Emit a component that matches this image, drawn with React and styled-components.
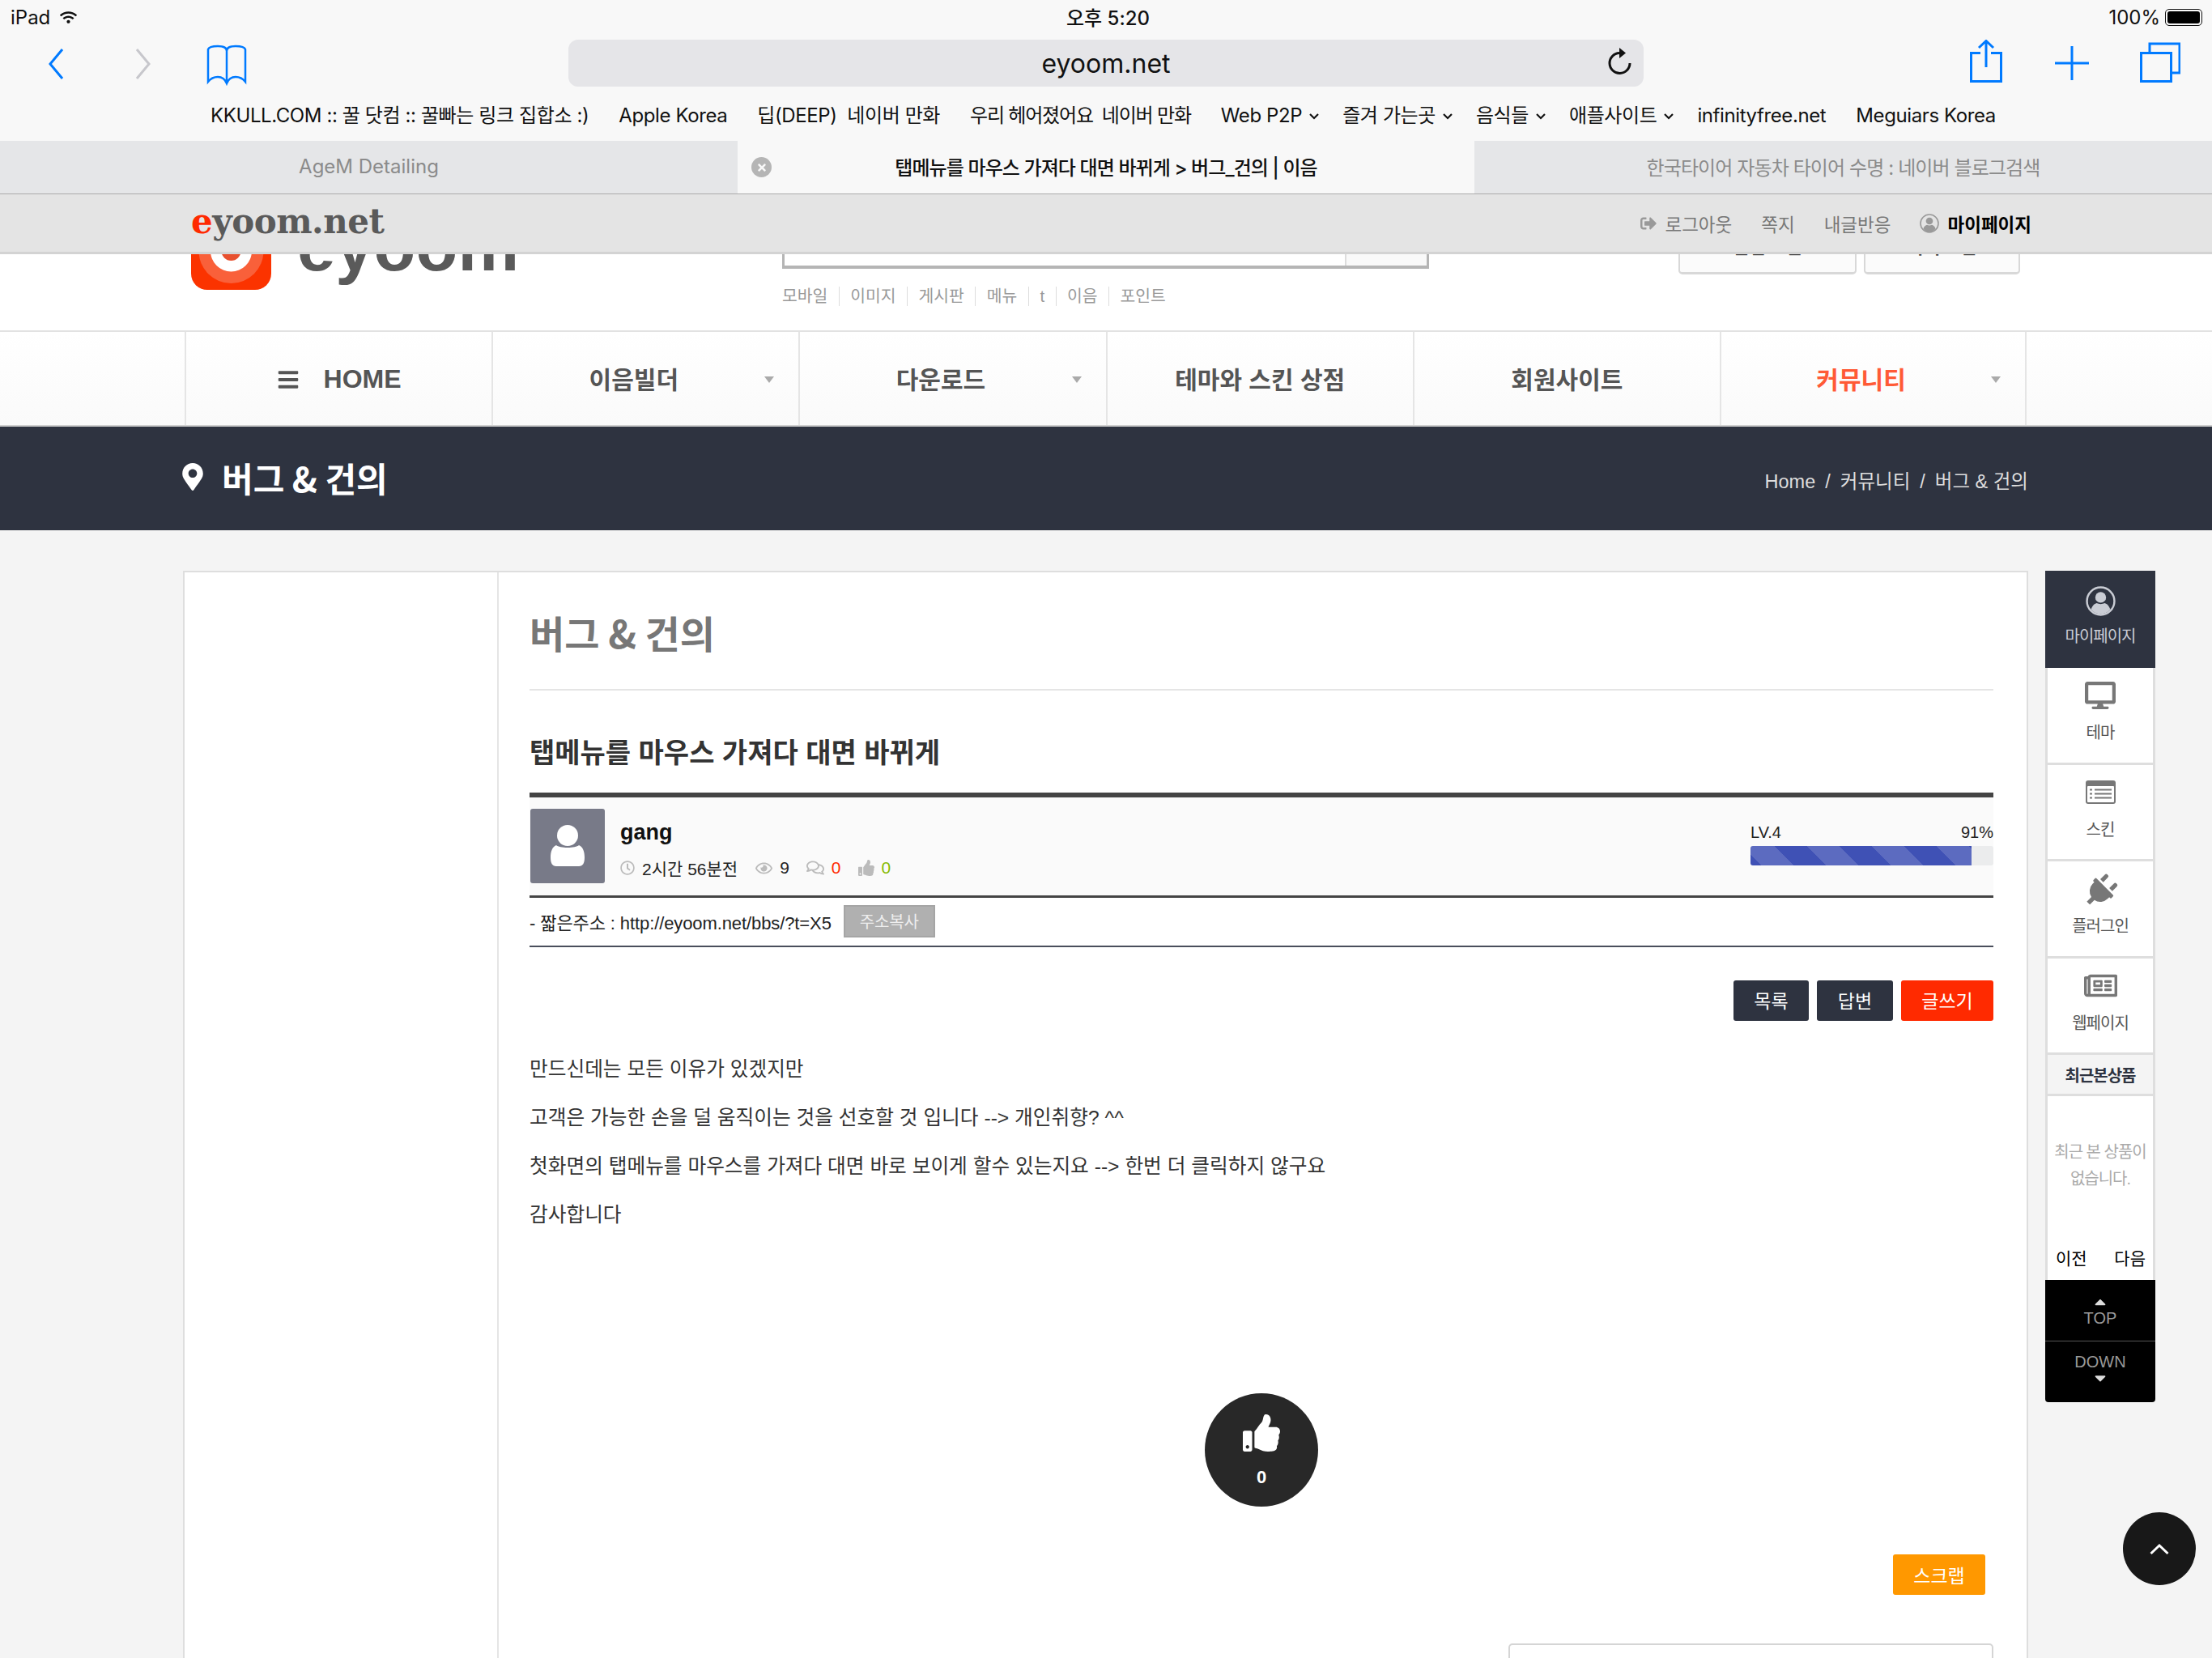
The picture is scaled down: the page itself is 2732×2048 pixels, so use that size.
import styled, { createGlobalStyle } from "styled-components";
import {
   FaBars, FaCaretDown, FaCaretUp, FaDesktop, FaMapMarkerAlt, FaPlug, FaRegClock,
   FaRegComments, FaRegEye, FaRegNewspaper, FaSignOutAlt, FaThumbsUp, FaTimes, FaWifi,
} from "react-icons/fa";

const sans = `"Liberation Sans", "Noto Sans CJK KR", sans-serif`;
const korean = `"Noto Sans CJK KR", sans-serif`;
const ui = `Inter, "Noto Sans CJK KR", sans-serif`;

const Global = createGlobalStyle`
   html, body { margin: 0; padding: 0; background: #f4f4f4; }
   * { box-sizing: border-box; }
`;

const favorites = [
   { label: "KKULL.COM :: 꿀 닷컴 :: 꿀빠는 링크 집합소 :)" },
   { label: "Apple Korea" },
   { label: "딥(DEEP)  네이버 만화" },
   { label: "우리 헤어졌어요  네이버 만화", tight: true },
   { label: "Web P2P", more: true },
   { label: "즐겨 가는곳", more: true },
   { label: "음식들", more: true },
   { label: "애플사이트", more: true },
   { label: "infinityfree.net" },
   { label: "Meguiars Korea" },
];

const tags = ["모바일", "이미지", "게시판", "메뉴", "t", "이음", "포인트"];

const navItems = [
   { label: "이음빌더", caret: true },
   { label: "다운로드", caret: true },
   { label: "테마와 스킨 상점" },
   { label: "회원사이트" },
   { label: "커뮤니티", caret: true, active: true },
];

const lines = [
   "만드신데는 모든 이유가 있겠지만",
   "고객은 가능한 손을 덜 움직이는 것을 선호할 것 입니다 --> 개인취향? ^^",
   "첫화면의 탭메뉴를 마우스를 가져다 대면 바로 보이게 할수 있는지요 --> 한번 더 클릭하지 않구요",
   "감사합니다",
];

// ring with head and shoulders, used in the sticky bar and the side panel
const UserRing = ({ size, color }) => (
   <svg width={size} height={size} viewBox="0 0 36 36" fill={color}>
      <circle cx="18" cy="18" r="16.5" fill="none" stroke={color} strokeWidth="2.4" />
      <circle cx="18" cy="13.5" r="6.5" />
      <path d="M6.5 28C8 23 11 21 13.5 20.5C16 22 20 22 22.5 20.5C25 21 28 23 29.5 28C26.5 31.5 22.5 33.5 18 33.5C13.5 33.5 9.5 31.5 6.5 28Z" />
   </svg>
);

const ListIcon = () => (
   <svg width="37" height="29" viewBox="0 0 37 29">
      <rect width="37" height="29" rx="3" fill="#777" />
      <rect x="2" y="7" width="33" height="20" rx="1" fill="#fff" />
      <path d="M5 11.5H8M11 11.5H32M5 16.5H8M11 16.5H32M5 21.5H8M11 21.5H32" stroke="#777" strokeWidth="2.2" />
   </svg>
);

const sideItems = [
   { label: "테마", icon: <FaDesktop size={38} /> },
   { label: "스킨", icon: <ListIcon /> },
   { label: "플러그인", icon: <FaPlug size={42} style={{ transform: "rotate(45deg) translate(2px, 2px)" }} /> },
   { label: "웹페이지", icon: <FaRegNewspaper size={41} /> },
];

const App = () => (
   <Page>
      <Global />
      <Chrome>
         <StatusBar>
            <StatusSide>iPad <FaWifi size={21} style={{ marginLeft: 6 }} /></StatusSide>
            <Clock>오후 5:20</Clock>
            <StatusSide $right>100% <Battery><i /></Battery></StatusSide>
         </StatusBar>
         <Toolbar>
            <ToolGroup>
               <svg width="19" height="58" fill="none" stroke="#007aff" strokeWidth="3"><path d="M17 12L2 30L17 48" /></svg>
               <svg width="19" height="58" fill="none" stroke="#c7c7cc" strokeWidth="3" style={{ marginLeft: 88 }}><path d="M2 12L17 30L2 48" /></svg>
               <svg width="50" height="58" fill="none" stroke="#007aff" strokeWidth="2.5" style={{ marginLeft: 69 }}>
                  <path d="M25 14C25 9 20 8 14 8C8 8 3 9 2 12L2 52C6 47 10 46 14 46C19 46 23 49 25 54C27 49 31 46 36 46C40 46 44 47 48 52L48 12C47 9 42 8 36 8C30 8 25 9 25 14ZM25 14L25 54" />
               </svg>
            </ToolGroup>
            <UrlPill>
               eyoom.net
               <Reload width="30" height="34" fill="none">
                  <path d="M27 19A12.5 12.5 0 1 1 14 6.5" stroke="#111" strokeWidth="3" />
                  <path d="M14 0L22 6.5L14 13Z" fill="#111" />
               </Reload>
            </UrlPill>
            <ToolGroup $right>
               <svg width="40" height="58" fill="none" stroke="#007aff" strokeWidth="3">
                  <path d="M13 16.5H1.5V51.5H38.5V16.5H26M20 34V2M11 10L20 1.5L29 10" />
               </svg>
               <svg width="42" height="58" fill="none" stroke="#007aff" strokeWidth="3" style={{ marginLeft: 65 }}>
                  <path d="M21 8V50M0 29H42" />
               </svg>
               <svg width="50" height="58" fill="none" stroke="#007aff" strokeWidth="3" style={{ marginLeft: 63 }}>
                  <path d="M1.5 16.5H38.5V51.5H1.5ZM12 15V5H49V41H39" />
               </svg>
            </ToolGroup>
         </Toolbar>
         <Favorites>
            {favorites.map(f => (
               <Favorite key={f.label} $tight={f.tight} $more={f.more}>
                  {f.label}
                  {f.more && <svg width="12" height="8" fill="none" stroke="#111" strokeWidth="2.2"><path d="M1 1L6 6L11 1" /></svg>}
               </Favorite>
            ))}
         </Favorites>
         <Tabs>
            <Tab>AgeM Detailing</Tab>
            <Tab $active $tight>
               <TabClose><FaTimes size={14} color="#f8f8f8" /></TabClose>
               탭메뉴를 마우스 가져다 대면 바뀌게 &gt; 버그_건의 | 이음
            </Tab>
            <Tab $tight>한국타이어 자동차 타이어 수명 : 네이버 블로그검색</Tab>
         </Tabs>
      </Chrome>

      <StickyBar>
         <StickyLogo><b>e</b>yoom.net</StickyLogo>
         <StickyLinks>
            <StickyLink><FaSignOutAlt size={20} color="#999" />로그아웃</StickyLink>
            <StickyLink>쪽지</StickyLink>
            <StickyLink>내글반응</StickyLink>
            <StickyLink $strong><UserRing size={24} color="#999" />마이페이지</StickyLink>
         </StickyLinks>
      </StickyBar>

      <SiteHeader>
         <Logo>
            <svg width="99" height="99" viewBox="0 0 99 99">
               <rect width="99" height="99" rx="20" fill="#fb3300" />
               <circle cx="49.5" cy="51" r="40" fill="#f9603a" />
               <circle cx="49.5" cy="51" r="25.5" fill="#fff" />
               <circle cx="49.5" cy="51" r="12" fill="#e8502f" />
            </svg>
            <LogoText>eyoom</LogoText>
         </Logo>
         <SearchArea>
            <SearchBox><span /></SearchBox>
            <TagList>
               {tags.map(t => <Tag key={t}>{t}</Tag>)}
            </TagList>
         </SearchArea>
         <HeaderButtons>
            <HeaderButton $width={220}>알림 <em>0</em> 건</HeaderButton>
            <HeaderButton $width={193}>쪽지 <em>0</em> 건</HeaderButton>
         </HeaderButtons>
      </SiteHeader>

      <Nav>
         <NavCell $home>
            <FaBars size={28} color="#555" style={{ marginRight: 30 }} />HOME
         </NavCell>
         {navItems.map(n => (
            <NavCell key={n.label} $caret={n.caret} $active={n.active}>
               {n.label}
               {n.caret && <NavCaret />}
            </NavCell>
         ))}
      </Nav>

      <TitleBar>
         <TitleLeft>
            <FaMapMarkerAlt size={34} />
            버그 &amp; 건의
         </TitleLeft>
         <Crumbs>
            <span>Home</span><i>/</i><span>커뮤니티</span><i>/</i><span>버그 &amp; 건의</span>
         </Crumbs>
      </TitleBar>

      <Main>
         <Card>
            <Content>
               <BoardTitle>버그 &amp; 건의</BoardTitle>
               <PostTitle>탭메뉴를 마우스 가져다 대면 바뀌게</PostTitle>
               <InfoBox>
                  <Avatar>
                     <svg width="44" height="52" viewBox="0 0 44 52" fill="#fff">
                        <circle cx="22" cy="13" r="13" />
                        <path d="M8 25C12 29 32 29 36 25C41 27 43 33 43 40C43 47 41 51 36 51H8C3 51 1 47 1 40C1 33 3 27 8 25Z" />
                     </svg>
                  </Avatar>
                  <Author>
                     <AuthorName>gang</AuthorName>
                     <Meta>
                        <FaRegClock size={18} color="#bbb" />
                        <MetaText $gap={22}>2시간 56분전</MetaText>
                        <FaRegEye size={21} color="#bbb" />
                        <MetaText $gap={21}>9</MetaText>
                        <FaRegComments size={22} color="#bbb" />
                        <MetaText $gap={21} $color="#ff2a00">0</MetaText>
                        <FaThumbsUp size={20} color="#bbb" />
                        <MetaText $color="#88bb00">0</MetaText>
                     </Meta>
                  </Author>
                  <Level>
                     <LevelLabels><span>LV.4</span><span>91%</span></LevelLabels>
                     <LevelTrack><LevelFill style={{ width: "91%" }} /></LevelTrack>
                  </Level>
               </InfoBox>
               <ShortUrl>
                  - 짧은주소 : http://eyoom.net/bbs/?t=X5
                  <CopyButton>주소복사</CopyButton>
               </ShortUrl>
               <Actions>
                  <ActionButton $width={93}>목록</ActionButton>
                  <ActionButton $width={94}>답변</ActionButton>
                  <ActionButton $width={114} $bg="#ff2a00">글쓰기</ActionButton>
               </Actions>
               <Article>
                  {lines.map(l => <p key={l}>{l}</p>)}
               </Article>
               <LikeCircle>
                  <FaThumbsUp size={46} />
                  <span>0</span>
               </LikeCircle>
               <ScrapRow><ScrapButton>스크랩</ScrapButton></ScrapRow>
               <BottomBox />
            </Content>
         </Card>

         <SidePanel>
            <SideItem $dark>
               <UserRing size={37} color="#c9ccd4" />
               <span>마이페이지</span>
            </SideItem>
            {sideItems.map(({ label, icon }) => (
               <SideItem key={label}>
                  <SideIcon>{icon}</SideIcon>
                  <span>{label}</span>
               </SideItem>
            ))}
            <RecentHead>최근본상품</RecentHead>
            <RecentBody>
               <RecentEmpty>최근 본 상품이<br />없습니다.</RecentEmpty>
               <RecentPager><span>이전</span><span>다음</span></RecentPager>
            </RecentBody>
            <ScrollBox>
               <ScrollButton>
                  <FaCaretUp size={22} color="#ddd" />
                  <span>TOP</span>
               </ScrollButton>
               <ScrollButton $down>
                  <span>DOWN</span>
                  <FaCaretDown size={22} color="#ddd" />
               </ScrollButton>
            </ScrollBox>
         </SidePanel>
      </Main>

      <BackToTop>
         <svg width="24" height="16" fill="none" stroke="#fff" strokeWidth="3"><path d="M1.5 14L12 4L22.5 14" /></svg>
      </BackToTop>
   </Page>
);

// browser chrome
const Page = styled.div`
   position: relative;
   width: 2732px;
   height: 2048px;
   overflow: hidden;
   background: #f4f4f4;
   font-family: ${sans};
`;

const Chrome = styled.div`
   background: #f8f8f8;
   height: 240px;
   border-bottom: 2px solid #aaa;
   font-family: ${ui};
   color: #111;
`;

const StatusBar = styled.div`
   height: 42px;
   margin-bottom: 7px;
   padding: 0 12px 0 13px;
   display: flex;
   align-items: center;
   justify-content: space-between;
   font-size: 24px;
`;

const StatusSide = styled.div`
   width: 300px;
   display: flex;
   align-items: center;
   justify-content: ${p => (p.$right ? "flex-end" : "flex-start")};
   gap: 6px;
`;

const Clock = styled.div`
   margin: -2px 0 0 4px;
   font-weight: 500;
`;

const Battery = styled.div`
   width: 46px;
   height: 21px;
   padding: 2px;
   border: 1px solid #111;
   border-radius: 5px;

   & > i {
      display: block;
      height: 100%;
      background: #000;
      border-radius: 3px;
   }
`;

const Toolbar = styled.div`
   height: 58px;
   display: grid;
   grid-template-columns: 702px 1328px 1fr;
`;

const ToolGroup = styled.div`
   display: flex;
   padding-left: ${p => (p.$right ? "403px" : "60px")};
`;

const UrlPill = styled.div`
   position: relative;
   display: flex;
   align-items: center;
   justify-content: center;
   background: #e5e5e8;
   border-radius: 12px;
   font-size: 32px;
`;

const Reload = styled.svg`
   position: absolute;
   right: 14px;
   top: 10px;
`;

const Favorites = styled.div`
   height: 67px;
   padding: 19px 0 0 260px;
   display: flex;
   gap: 37px;
   font-size: 24px;
   letter-spacing: -0.4px;
   line-height: 34px;
   white-space: pre;
`;

const Favorite = styled.div`
   display: flex;
   align-items: flex-start;
   gap: 9px;
   letter-spacing: ${p => (p.$tight ? "-1.2px" : "inherit")};
   margin-right: ${p => (p.$more ? "-8px" : "0")};

   & > svg {
      margin-top: 14px;
   }
`;

const Tabs = styled.div`
   display: grid;
   grid-template-columns: 911px 910px 1fr;
   height: 65px;
`;

const Tab = styled.div`
   position: relative;
   display: flex;
   align-items: center;
   justify-content: center;
   padding-bottom: 2px;
   font-size: 24px;
   letter-spacing: ${p => (p.$tight ? "-0.9px" : "0")};
   color: ${p => (p.$active ? "#111" : "#8b8b8b")};
   font-weight: ${p => (p.$active ? 500 : 400)};
   background: ${p => (p.$active ? "#f8f8f8" : "#e5e6e8")};
`;

const TabClose = styled.span`
   position: absolute;
   left: 17px;
   top: 20px;
   width: 25px;
   height: 25px;
   border-radius: 50%;
   background: #b5b5b5;
   display: flex;
   align-items: center;
   justify-content: center;
`;

const StickyBar = styled.div`
   height: 74px;
   padding: 0 223px 0 236px;
   display: flex;
   align-items: center;
   justify-content: space-between;
   background: #e4e4e4;
   border-bottom: 3px solid #d3d3d3;
`;

const StickyLogo = styled.div`
   font-family: "DejaVu Serif", serif;
   font-weight: 700;
   font-size: 42px;
   letter-spacing: -0.5px;
   color: #5a5a5a;
   margin-top: -5px;

   & > b {
      color: #ff2a00;
   }
`;

const StickyLinks = styled.div`
   display: flex;
   gap: 36px;
   font-size: 22.5px;
`;

const StickyLink = styled.div`
   display: flex;
   align-items: center;
   gap: 10px;
   color: ${p => (p.$strong ? "#000" : "#777")};
   font-weight: ${p => (p.$strong ? 700 : 400)};
`;

// site header, the sticky bar hides its upper part
const SiteHeader = styled.div`
   height: 94px;
   overflow: hidden;
   background: #fff;
   padding: 0 237px 0 236px;
   display: flex;
   align-items: flex-end;
`;

const Logo = styled.div`
   width: 730px;
   flex: none;
   display: flex;
   align-items: flex-end;
   gap: 32px;
   margin-bottom: 50px;
`;

const LogoText = styled.div`
   font-weight: 700;
   font-size: 85px;
   line-height: 84px;
   color: #5a5a5a;
   margin-bottom: 11px;
`;

const SearchArea = styled.div`
   width: 799px;
   flex: none;
`;

const SearchBox = styled.div`
   height: 60px;
   display: flex;
   justify-content: flex-end;
   border: 3px solid #b5b5b5;
   border-bottom-width: 4px;

   & > span {
      width: 101px;
      background: #f9f9f9;
      border-left: 2px solid #ddd;
   }
`;

const TagList = styled.div`
   margin: 22px 0 30px;
   display: flex;
   font-size: 20.4px;
   line-height: 24px;
   color: #999;
`;

const Tag = styled.span`
   padding: 0 13.5px;
   border-left: 1px solid #ddd;

   &:first-child {
      padding-left: 0;
      border-left: 0;
   }
`;

const HeaderButtons = styled.div`
   margin-left: auto;
   margin-bottom: 69px;
   display: flex;
   gap: 9px;
`;

const HeaderButton = styled.div`
   width: ${p => p.$width}px;
   height: 60px;
   padding-top: 7px;
   border: 2px solid #d8d8d8;
   border-bottom-width: 3px;
   border-radius: 5px;
   background: #fbfbfb;
   font-size: 22px;
   font-weight: 700;
   line-height: 36px;
   color: #444;
   text-align: center;

   & em {
      font-style: normal;
      color: #ff5a36;
   }
`;

const Nav = styled.div`
   height: 119px;
   padding-left: 228px;
   display: grid;
   grid-template-columns: repeat(6, 379.2px);
   background: linear-gradient(#fff, #fafafa);
   border-top: 2px solid #e2e2e2;
   border-bottom: 2px solid #cfcfcf;
`;

const NavCell = styled.div`
   position: relative;
   display: flex;
   align-items: center;
   justify-content: center;
   padding-top: ${p => (p.$home ? "2px" : "0")};
   padding-bottom: ${p => (p.$home ? "0" : "2px")};
   padding-right: ${p => (p.$caret ? "30px" : "0")};
   border-left: 2px solid #e5e5e5;
   font-size: ${p => (p.$home ? "32px" : "30px")};
   font-weight: 700;
   color: ${p => (p.$active ? "#ff5a36" : "#555")};

   &:last-child {
      border-right: 2px solid #e5e5e5;
   }
`;

const NavCaret = styled.span`
   position: absolute;
   right: 30px;
   top: 50%;
   margin-top: -3px;
   border: 6px solid transparent;
   border-top: 8px solid #aaa;
`;

const TitleBar = styled.div`
   height: 128px;
   padding: 0 227px 0 221px;
   display: flex;
   align-items: center;
   justify-content: space-between;
   background: #2e3340;
   color: #fff;
`;

const TitleLeft = styled.div`
   display: flex;
   align-items: center;
   gap: 19px;
   margin-top: -4px;
   font-family: ${korean};
   font-size: 42px;
   font-weight: 700;
`;

const Crumbs = styled.div`
   display: flex;
   align-items: baseline;
   gap: 12px;
   font-size: 23.5px;
   color: #ddd;
   margin-top: 4px;

   & i {
      font-style: normal;
   }
`;

// main layout
const Main = styled.div`
   padding: 50px 0 0 226px;
   display: flex;
   align-items: flex-start;
   gap: 21px;
`;

const Card = styled.div`
   width: 2279px;
   height: 1400px;
   padding-left: 386px;
   background: #fff;
   border: 2px solid #dedede;
`;

const Content = styled.div`
   height: 100%;
   padding: 0 41px 0 38px;
   border-left: 2px solid #e5e5e5;
`;

const BoardTitle = styled.h2`
   margin: 0;
   height: 146px;
   padding-top: 41px;
   border-bottom: 2px solid #e5e5e5;
   font-family: ${korean};
   font-size: 47px;
   line-height: 66px;
   font-weight: 700;
   color: #777;
`;

const PostTitle = styled.h3`
   margin: 0;
   height: 132px;
   padding-top: 52px;
   font-size: 34px;
   line-height: 50px;
   font-weight: 700;
   color: #333;
   border-bottom: 6px solid #444;
`;

const InfoBox = styled.div`
   height: 124px;
   padding: 14px 0 0 1px;
   display: flex;
   background: #fafafa;
   border-bottom: 3px solid #444;
`;

const Avatar = styled.div`
   width: 92px;
   height: 92px;
   flex: none;
   display: flex;
   align-items: center;
   justify-content: center;
   border-radius: 3px;
   background: #787a88;
`;

const Author = styled.div`
   margin-left: 19px;
`;

const AuthorName = styled.div`
   margin-top: 14px;
   font-size: 27px;
   line-height: 30px;
   font-weight: 700;
   color: #111;
`;

const Meta = styled.div`
   margin-top: 14px;
   display: flex;
   align-items: center;
   height: 30px;
`;

const MetaText = styled.span`
   margin: 0 ${p => p.$gap || 0}px 0 9px;
   font-size: 21px;
   color: ${p => p.$color || "#222"};
`;

const Level = styled.div`
   margin-left: auto;
   width: 300px;
   padding-top: 17px;
`;

const LevelLabels = styled.div`
   display: flex;
   justify-content: space-between;
   font-size: 20px;
   line-height: 24px;
   color: #222;
   margin-bottom: 5px;
`;

const LevelTrack = styled.div`
   height: 24px;
   border-radius: 3px;
   overflow: hidden;
   background: #ebeced;
`;

const LevelFill = styled.div`
   height: 100%;
   background: repeating-linear-gradient(
      45deg,
      #3f51b5 0,
      #3f51b5 9.2px,
      #5c6bc0 9.2px,
      #5c6bc0 37.5px,
      #3f51b5 37.5px,
      #3f51b5 56.57px
   );
`;

const ShortUrl = styled.div`
   height: 61px;
   padding-bottom: 2px;
   display: flex;
   align-items: center;
   gap: 15px;
   border-bottom: 2px solid #4a4e5c;
   font-size: 22px;
   letter-spacing: -0.1px;
   color: #222;
`;

const CopyButton = styled.span`
   width: 113px;
   height: 40px;
   display: flex;
   align-items: center;
   justify-content: center;
   background: #b0b0b0;
   border: 2px solid #a5a5a5;
   font-size: 20px;
   color: #eee;
`;

const Actions = styled.div`
   margin-top: 41px;
   display: flex;
   justify-content: flex-end;
   gap: 10px;
`;

const ActionButton = styled.div`
   width: ${p => p.$width}px;
   height: 50px;
   padding-bottom: 2px;
   display: flex;
   align-items: center;
   justify-content: center;
   border-radius: 3px;
   background: ${p => p.$bg || "#2e3340"};
   color: #fff;
   font-size: 23px;
`;

const Article = styled.div`
   margin-top: 30px;
   font-size: 24.7px;
   line-height: 60px;
   color: #333;

   & p {
      margin: 0;
   }
`;

const LikeCircle = styled.div`
   width: 140px;
   height: 140px;
   margin: 190px auto 0;
   padding-top: 26px;
   display: flex;
   flex-direction: column;
   align-items: center;
   gap: 19px;
   border-radius: 50%;
   background: #282828;
   color: #fff;
   font-size: 22px;
   font-weight: 700;
`;

const ScrapRow = styled.div`
   margin-top: 59px;
   padding-right: 10px;
   display: flex;
   justify-content: flex-end;
`;

const ScrapButton = styled.div`
   width: 114px;
   height: 50px;
   display: flex;
   align-items: center;
   justify-content: center;
   border-radius: 3px;
   background: #ff9800;
   color: #fff;
   font-size: 23px;
`;

const BottomBox = styled.div`
   width: 599px;
   height: 100px;
   margin: 60px 0 0 auto;
   border: 2px solid #d5d5d5;
   border-radius: 5px;
`;

// side panel
const SidePanel = styled.div`
   width: 136px;
   flex: none;
`;

const SideItem = styled.div`
   height: ${p => (p.$dark ? "120px" : "119.5px")};
   padding-top: ${p => (p.$dark ? "19px" : "15px")};
   display: flex;
   flex-direction: column;
   align-items: center;
   gap: ${p => (p.$dark ? "11px" : "13px")};
   background: ${p => (p.$dark ? "#2e3340" : "#fff")};
   color: ${p => (p.$dark ? "#c9ccd4" : "#777")};
   border-style: solid;
   border-color: #dedede;
   border-width: ${p => (p.$dark ? "0" : "0 3px 3px")};

   & > span {
      font-size: 20px;
      line-height: 28px;
      letter-spacing: -1px;
      color: ${p => (p.$dark ? "#c9ccd4" : "#555")};
   }
`;

const SideIcon = styled.div`
   height: 38px;
   display: flex;
   align-items: center;
   justify-content: center;
`;

const RecentHead = styled.div`
   height: 51px;
   display: flex;
   align-items: center;
   justify-content: center;
   background: #f4f4f4;
   border: 3px solid #dedede;
   border-top: 0;
   font-size: 20px;
   font-weight: 700;
   letter-spacing: -1px;
   color: #2e3340;
`;

const RecentBody = styled.div`
   height: 227px;
   padding-top: 53px;
   background: #fff;
   border: solid #dedede;
   border-width: 0 3px;
`;

const RecentEmpty = styled.div`
   font-size: 20px;
   line-height: 33px;
   letter-spacing: -1px;
   color: #aaa;
   text-align: center;
`;

const RecentPager = styled.div`
   margin-top: 67px;
   padding: 0 9px 0 10px;
   display: flex;
   justify-content: space-between;
   font-size: 21px;
   line-height: 30px;
   color: #000;
`;

const ScrollBox = styled.div`
   height: 151px;
   background: #000;
   border-radius: 0 0 4px 4px;
`;

const ScrollButton = styled.div`
   height: ${p => (p.$down ? "76px" : "75px")};
   padding-bottom: ${p => (p.$down ? "7px" : "0")};
   display: flex;
   flex-direction: column;
   align-items: center;
   justify-content: center;
   font-size: 20px;
   line-height: 22px;
   color: #999;
   border-top: ${p => (p.$down ? "1px solid #555" : "0")};

   & > svg {
      margin: -2px 0;
   }
`;

const BackToTop = styled.div`
   position: absolute;
   left: 2622px;
   top: 1868px;
   width: 90px;
   height: 90px;
   display: flex;
   align-items: center;
   justify-content: center;
   border-radius: 50%;
   background: #181818;
`;

export default App;
